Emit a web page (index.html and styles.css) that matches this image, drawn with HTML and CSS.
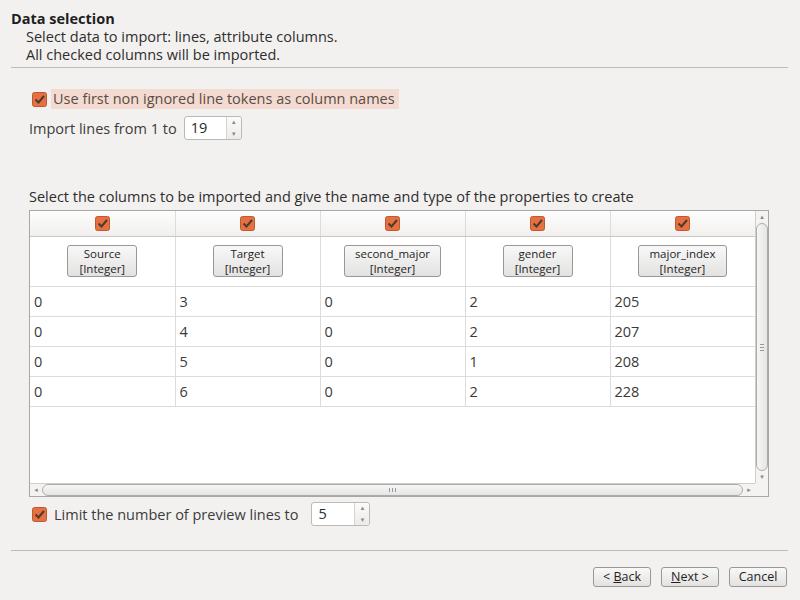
FILE: index.html
```html
<!DOCTYPE html>
<html>
<head>
<meta charset="utf-8">
<link rel="stylesheet" href="styles.css">
</head>
<body>
<div class="page">
  <div class="head">
    <div class="title">Data selection</div>
    <div class="sub">Select data to import: lines, attribute columns.</div>
    <div class="sub">All checked columns will be imported.</div>
  </div>
  <div class="sep"></div>
  <div class="content">
    <div class="row-check">
      <span class="cb"><svg width="15" height="15" viewBox="0 0 15 15"><rect x="0.5" y="0.5" width="14" height="14" rx="2" fill="#e6703f" stroke="#bd5a33"/><path d="M3.5 7.5 L6.5 10.5 L12 4" fill="none" stroke="#4d3a32" stroke-width="2"/></svg></span>
      <span class="hl">Use first non ignored line tokens as column names</span>
    </div>
    <div class="row-import">
      <span>Import lines from 1 to</span>
      <span class="spin"><span class="spin-val">19</span><span class="spin-arr"><span class="up">&#9652;</span><span class="dn">&#9662;</span></span></span>
    </div>
    <div class="select-label">Select the columns to be imported and give the name and type of the properties to create</div>
    <div class="frame">
      <div class="view">
        <table class="grid">
          <tr class="r-check">
            <td><svg class="ic" width="15" height="15" viewBox="0 0 15 15"><rect x="0.5" y="0.5" width="14" height="14" rx="2" fill="#e6703f" stroke="#bd5a33"/><path d="M3.5 7.5 L6.5 10.5 L12 4" fill="none" stroke="#4d3a32" stroke-width="2"/></svg></td>
            <td><svg class="ic" width="15" height="15" viewBox="0 0 15 15"><rect x="0.5" y="0.5" width="14" height="14" rx="2" fill="#e6703f" stroke="#bd5a33"/><path d="M3.5 7.5 L6.5 10.5 L12 4" fill="none" stroke="#4d3a32" stroke-width="2"/></svg></td>
            <td><svg class="ic" width="15" height="15" viewBox="0 0 15 15"><rect x="0.5" y="0.5" width="14" height="14" rx="2" fill="#e6703f" stroke="#bd5a33"/><path d="M3.5 7.5 L6.5 10.5 L12 4" fill="none" stroke="#4d3a32" stroke-width="2"/></svg></td>
            <td><svg class="ic" width="15" height="15" viewBox="0 0 15 15"><rect x="0.5" y="0.5" width="14" height="14" rx="2" fill="#e6703f" stroke="#bd5a33"/><path d="M3.5 7.5 L6.5 10.5 L12 4" fill="none" stroke="#4d3a32" stroke-width="2"/></svg></td>
            <td><svg class="ic" width="15" height="15" viewBox="0 0 15 15"><rect x="0.5" y="0.5" width="14" height="14" rx="2" fill="#e6703f" stroke="#bd5a33"/><path d="M3.5 7.5 L6.5 10.5 L12 4" fill="none" stroke="#4d3a32" stroke-width="2"/></svg></td>
          </tr>
          <tr class="r-btn">
            <td><span class="colbtn"><span class="l">Source</span><span class="l">[Integer]</span></span></td>
            <td><span class="colbtn"><span class="l">Target</span><span class="l">[Integer]</span></span></td>
            <td><span class="colbtn"><span class="l">second_major</span><span class="l">[Integer]</span></span></td>
            <td><span class="colbtn"><span class="l">gender</span><span class="l">[Integer]</span></span></td>
            <td><span class="colbtn"><span class="l">major_index</span><span class="l">[Integer]</span></span></td>
          </tr>
          <tr class="r-data"><td>0</td><td>3</td><td>0</td><td>2</td><td>205</td></tr>
          <tr class="r-data"><td>0</td><td>4</td><td>0</td><td>2</td><td>207</td></tr>
          <tr class="r-data"><td>0</td><td>5</td><td>0</td><td>1</td><td>208</td></tr>
          <tr class="r-data"><td>0</td><td>6</td><td>0</td><td>2</td><td>228</td></tr>
        </table>
      </div>
      <div class="vscroll">
        <div class="arr-v">&#9652;</div>
        <div class="vthumb"><span class="grip-v"></span></div>
        <div class="arr-v">&#9662;</div>
      </div>
      <div class="hscroll">
        <div class="arr-h">&#9666;</div>
        <div class="hthumb"><span class="grip-h"></span></div>
        <div class="arr-h">&#9656;</div>
      </div>
      <div class="corner"></div>
    </div>
    <div class="row-limit">
      <span class="cb"><svg width="15" height="15" viewBox="0 0 15 15"><rect x="0.5" y="0.5" width="14" height="14" rx="2" fill="#e6703f" stroke="#bd5a33"/><path d="M3.5 7.5 L6.5 10.5 L12 4" fill="none" stroke="#4d3a32" stroke-width="2"/></svg></span>
      <span class="limit-text">Limit the number of preview lines to</span>
      <span class="spin spin2"><span class="spin-val">5</span><span class="spin-arr"><span class="up">&#9652;</span><span class="dn">&#9662;</span></span></span>
    </div>
  </div>
  <div class="sep sep2"></div>
  <div class="buttons">
    <span class="btn">&lt; <u>B</u>ack</span>
    <span class="btn"><u>N</u>ext &gt;</span>
    <span class="btn">Cancel</span>
  </div>
</div>
</body>
</html>
```
FILE: styles.css
```css
html, body {
  margin: 0;
  padding: 0;
  background: #f2f1f0;
}
body {
  font-family: "Open Sans", "DejaVu Sans", sans-serif;
  font-size: 14.5px;
  color: #3c3c3c;
  width: 800px;
  height: 600px;
  overflow: hidden;
}
.page {
  padding: 10px 12px 0 11px;
}
.head {
  line-height: 18px;
}
.title {
  font-weight: bold;
  color: #1e1e1e;
}
.sub {
  padding-left: 15px;
  color: #2e2e2e;
}
.sep {
  height: 1px;
  background: #bdbbb8;
  margin-top: 3px;
}
.content {
  padding-left: 18px;
}
.row-check {
  display: flex;
  align-items: center;
  margin-top: 21px;
  height: 20px;
  padding-left: 3px;
}
.cb {
  display: inline-flex;
  width: 15px;
  height: 15px;
}
.hl {
  background: #f3dbd1;
  color: #5b4b45;
  padding: 0 4px 0 2px;
  margin-left: 4px;
  line-height: 20px;
}
.row-import {
  display: flex;
  align-items: center;
  margin-top: 7px;
  height: 24px;
}
.spin {
  display: inline-flex;
  width: 58px;
  height: 24px;
  border: 1px solid #bcbab6;
  border-radius: 3px;
  background: #fff;
  margin-left: 7px;
  box-sizing: border-box;
}
.spin-val {
  flex: 1;
  padding-left: 6px;
  line-height: 22px;
  color: #2a2a2a;
}
.spin-arr {
  width: 14px;
  border-left: 1px solid #d6d4d1;
  background: linear-gradient(#fbfbfb, #ecebea);
  display: flex;
  flex-direction: column;
  align-items: center;
  justify-content: space-between;
  font-size: 7px;
  line-height: 10px;
  color: #8a8a8a;
  border-radius: 0 3px 3px 0;
}
.select-label {
  margin-top: 48px;
  line-height: 18px;
  color: #2e2e2e;
}
.frame {
  margin-top: 4px;
  width: 740px;
  height: 287px;
  box-sizing: border-box;
  border: 1px solid #a9a7a4;
  background: #fff;
  display: grid;
  grid-template-columns: 725px 13px;
  grid-template-rows: 272px 13px;
}
.view {
  overflow: hidden;
  background: #fff;
}
.grid {
  border-collapse: collapse;
  table-layout: fixed;
  width: 725px;
}
.grid td {
  width: 145px;
  box-sizing: border-box;
  border-right: 1px solid #dcdcdc;
  border-bottom: 1px solid #dcdcdc;
  padding: 0;
}
.r-check td {
  height: 25px;
  text-align: center;
  vertical-align: middle;
  background: linear-gradient(#fdfdfd, #f1f0ef);
  border-bottom: 1px solid #c9c8c6;
}
.ic {
  display: block;
  margin: 0 auto;
}
.r-btn td {
  height: 50px;
  text-align: center;
  vertical-align: middle;
}
.colbtn {
  display: inline-block;
  border: 1px solid #999896;
  border-radius: 3px;
  background: linear-gradient(#f8f8f8, #e3e2e1);
  font-size: 11.5px;
  line-height: 15px;
  padding: 0 10px;
  color: #1e1e1e;
  min-width: 48px;
}
.colbtn .l {
  display: block;
}
.r-data td {
  height: 30px;
  padding-left: 4px;
  vertical-align: middle;
  color: #3a3a3a;
}
.vscroll {
  border-left: 1px solid #d0cecb;
  background: #f4f3f2;
  display: flex;
  flex-direction: column;
}
.arr-v {
  height: 12px;
  font-size: 7px;
  color: #8a8a8a;
  text-align: center;
  line-height: 12px;
}
.vthumb {
  flex: 1;
  border: 1px solid #aeacaa;
  border-radius: 6px;
  background: linear-gradient(90deg, #f6f6f6, #e6e5e4);
  display: flex;
  align-items: center;
  justify-content: center;
}
.grip-v {
  width: 4px;
  height: 5px;
  border-top: 1px solid #999;
  border-bottom: 1px solid #999;
  background: linear-gradient(transparent 2px, #999 2px, #999 3px, transparent 3px);
}
.hscroll {
  border-top: 1px solid #d0cecb;
  background: #f4f3f2;
  display: flex;
}
.arr-h {
  width: 12px;
  font-size: 7px;
  color: #8a8a8a;
  text-align: center;
  line-height: 12px;
}
.hthumb {
  flex: 1;
  border: 1px solid #aeacaa;
  border-radius: 6px;
  background: linear-gradient(#f6f6f6, #e6e5e4);
  display: flex;
  align-items: center;
  justify-content: center;
}
.grip-h {
  width: 5px;
  height: 4px;
  border-left: 1px solid #999;
  border-right: 1px solid #999;
  background: linear-gradient(90deg, transparent 2px, #999 2px, #999 3px, transparent 3px);
}
.corner {
  background: #f4f3f2;
}
.row-limit {
  display: flex;
  align-items: center;
  margin-top: 4px;
  height: 26px;
  padding-left: 3px;
}
.limit-text {
  margin-left: 7px;
  color: #3c3c3c;
}
.spin2 {
  margin-left: 13px;
  width: 59px;
}
.sep2 {
  margin-top: 23px;
}
.buttons {
  display: flex;
  justify-content: flex-end;
  gap: 10px;
  margin-top: 16px;
  padding-right: 1px;
}
.btn {
  display: inline-block;
  box-sizing: border-box;
  height: 20px;
  width: 58px;
  border: 1px solid #999896;
  border-radius: 3px;
  background: linear-gradient(#f8f8f8, #e3e2e1);
  font-size: 12.5px;
  line-height: 18px;
  text-align: center;
  color: #1e1e1e;
}
.btn u {
  text-decoration: underline;
}
```
